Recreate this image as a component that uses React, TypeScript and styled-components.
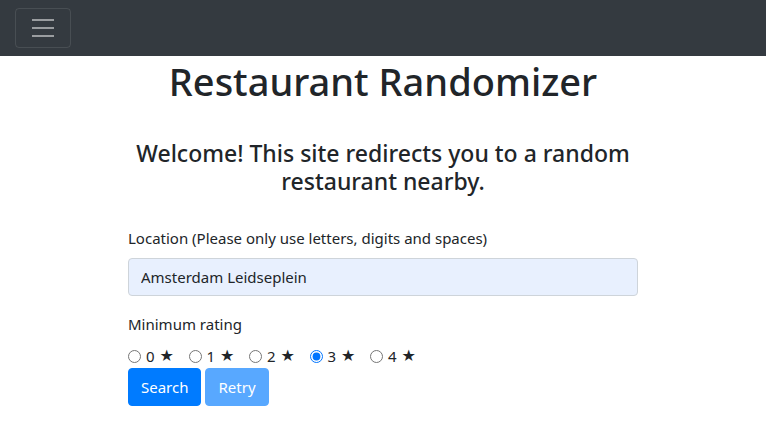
import React from "react";
import styled, { createGlobalStyle } from "styled-components";

const Global = createGlobalStyle`
  html, body { margin: 0; padding: 0; background: #fff; }
  body {
    font-family: "Noto Sans", "Open Sans", "DejaVu Sans", sans-serif;
    font-size: 16px;
    line-height: 1.5;
    color: #212529;
  }
  * { box-sizing: border-box; }
`;

const Navbar = styled.nav`
  height: 56px;
  background: #343a40;
  display: flex;
  align-items: center;
  padding: 0 15px;
`;

const Toggler = styled.button`
  width: 56px;
  height: 40px;
  padding: 0;
  background: transparent;
  border: 1px solid rgba(255, 255, 255, 0.1);
  border-radius: 4px;
  display: flex;
  align-items: center;
  justify-content: center;
`;

const Container = styled.main`
  width: 540px;
  margin: 0 auto;
  padding: 0 15px;
`;

const Title = styled.h1`
  margin: 0 0 8px;
  padding-top: 3px;
  font-size: 38px;
  font-weight: 500;
  line-height: 1.2;
  text-align: center;
`;

const Subtitle = styled.h4`
  margin: 34px 0 0;
  font-size: 23px;
  font-weight: 500;
  line-height: 28.8px;
  text-align: center;
`;

const Form = styled.form`
  margin-top: 30px;
`;

const Group = styled.div`
  margin-bottom: 16px;
`;

const Label = styled.label`
  display: block;
  margin-bottom: 8px;
  font-size: 15px;
  line-height: 24px;
`;

const Input = styled.input`
  display: block;
  width: 100%;
  height: 38px;
  padding: 6px 12px;
  font: inherit;
  font-size: 15px;
  color: #212529;
  background: #e8f0fe;
  border: 1px solid #ced4da;
  border-radius: 4px;
  outline: none;
`;

const RadioRow = styled.div`
  display: flex;
  align-items: center;
  height: 24px;
`;

const RadioOption = styled.label`
  display: inline-flex;
  align-items: center;
  width: 60.5px;
  font-size: 15px;
  line-height: 24px;
`;

const Radio = styled.input`
  width: 13px;
  height: 13px;
  margin: 0 5px 0 0;
`;

const Star = styled.span`
  margin-left: 5px;
  font-family: "DejaVu Sans", sans-serif;
  font-size: 16px;
`;

const Buttons = styled.div`
  display: flex;
  gap: 4px;
`;

const Button = styled.button<{ $disabled?: boolean }>`
  height: 38px;
  padding: 6px 12px;
  font: inherit;
  font-size: 15px;
  color: #fff;
  background: #007bff;
  border: 1px solid #007bff;
  border-radius: 4px;
  opacity: ${(p) => (p.$disabled ? 0.65 : 1)};
`;

export default function App() {
  return (
    <>
      <Global />
      <Navbar>
        <Toggler aria-label="Toggle navigation">
          <svg width="30" height="30" viewBox="0 0 30 30">
            <path
              d="M4 7h22M4 15h22M4 23h22"
              stroke="rgba(255,255,255,0.5)"
              strokeWidth="2"
              strokeLinecap="butt"
            />
          </svg>
        </Toggler>
      </Navbar>
      <Container>
        <Title>Restaurant Randomizer</Title>
        <Subtitle>
          Welcome! This site redirects you to a random restaurant nearby.
        </Subtitle>
        <Form onSubmit={(e) => e.preventDefault()}>
          <Group>
            <Label>Location (Please only use letters, digits and spaces)</Label>
            <Input defaultValue="Amsterdam Leidseplein" />
          </Group>
          <Label>Minimum rating</Label>
          <RadioRow>
            {[0, 1, 2, 3, 4].map((n) => (
              <RadioOption key={n}>
                <Radio type="radio" name="rating" defaultChecked={n === 3} />
                {n}
                <Star>★</Star>
              </RadioOption>
            ))}
          </RadioRow>
          <Buttons>
            <Button type="submit">Search</Button>
            <Button type="button" $disabled>
              Retry
            </Button>
          </Buttons>
        </Form>
      </Container>
    </>
  );
}
